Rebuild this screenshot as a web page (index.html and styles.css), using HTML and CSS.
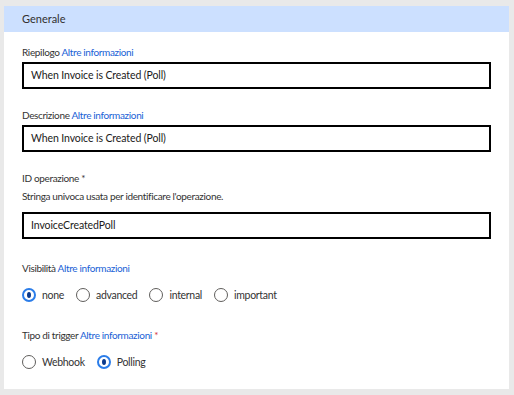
FILE: index.html
```html
<!DOCTYPE html>
<html lang="it">
<head>
    <meta charset="utf-8">
    <title>Generale</title>
    <link rel="stylesheet" href="styles.css">
</head>
<body>
    <div class="panel">
        <div class="panel-head">Generale</div>
        <div class="panel-body">
            <div class="field">
                <label class="lbl">Riepilogo <a href="#">Altre informazioni</a></label>
                <div class="inp">When Invoice is Created (Poll)</div>
            </div>
            <div class="field">
                <label class="lbl">Descrizione <a href="#">Altre informazioni</a></label>
                <div class="inp">When Invoice is Created (Poll)</div>
            </div>
            <div class="field">
                <label class="lbl">ID operazione *</label>
                <p class="desc">Stringa univoca usata per identificare l'operazione.</p>
                <div class="inp">InvoiceCreatedPoll</div>
            </div>
            <div class="field field-choice">
                <label class="lbl">Visibilità <a href="#">Altre informazioni</a></label>
                <ul class="radios">
                    <li class="on"><span class="dot"></span>none</li>
                    <li><span class="dot"></span>advanced</li>
                    <li><span class="dot"></span>internal</li>
                    <li><span class="dot"></span>important</li>
                </ul>
            </div>
            <div class="field field-choice">
                <label class="lbl">Tipo di trigger <a href="#">Altre informazioni</a> <em class="req">*</em></label>
                <ul class="radios">
                    <li><span class="dot"></span>Webhook</li>
                    <li class="on"><span class="dot"></span>Polling</li>
                </ul>
            </div>
        </div>
    </div>
</body>
</html>
```
FILE: styles.css
```css
@charset 'utf-8';
html,body,p,ul,li { margin:0; padding:0; }
body { background-color:#e9e9e9; padding:6px 5px 6px 4px; font-family:Lato, 'Noto Sans', sans-serif; color:#333; }
a { text-decoration:none; color:#1a5fd6; }
em { font-style:normal; }
ul, li { list-style:none; }

.panel { background-color:#fff; height:383px; }
.panel-head { height:26px; line-height:26px; padding-left:18px; background-color:#cce0ff; font-size:11px; color:#323130; }
.panel-body { padding:13px 18px 0; }

.field + .field { margin-top:19px; }
.field + .field-choice { margin-top:22px; }
.field-choice + .field-choice { margin-top:25px; }
.lbl { display:block; font-size:10px; line-height:14px; letter-spacing:-0.35px; }
.desc { font-size:10px; line-height:14px; margin-top:4px; letter-spacing:-0.35px; }
.inp { margin-top:3px; height:23px; line-height:23px; border:2px solid #000; padding:0 7px; font-size:10.5px; letter-spacing:-0.1px; color:#1b1a19; }
.field .desc + .inp { margin-top:9px; }
.req { color:#d13438; }

.radios { display:flex; gap:12px; margin-top:12px; }
.radios li { display:flex; align-items:center; font-size:10.5px; line-height:16px; letter-spacing:-0.3px; }
.radios .dot { width:12px; height:12px; border:1px solid #605e5c; border-radius:50%; margin-right:6px; position:relative; }
.radios li.on .dot { border:2px solid #2b7de9; width:10px; height:10px; }
.radios li.on .dot:after { content:''; position:absolute; left:3px; top:2px; width:4px; height:6px; border-radius:50%; background-color:#0b3a8c; }
```
